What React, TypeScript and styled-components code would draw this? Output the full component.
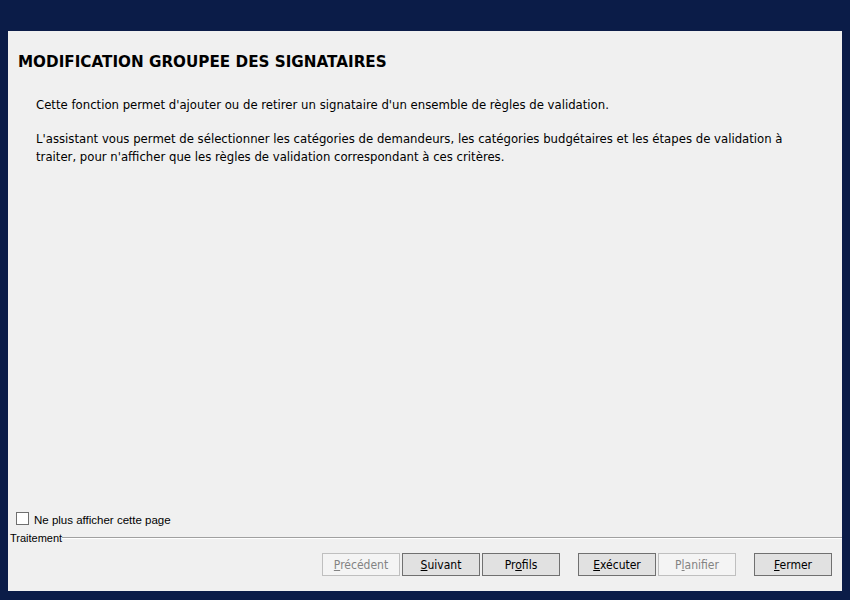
import styled, { createGlobalStyle } from "styled-components"

const GlobalStyle = createGlobalStyle`
  html, body {
    margin: 0;
    padding: 0;
    background: #0b1c48;
  }
  body {
    font-family: "DejaVu Sans", Tahoma, sans-serif;
  }
`

type ButtonDef = { label: string; key: string; disabled?: boolean }

const groups: ButtonDef[][] = [
  [
    { label: "Précédent", key: "P", disabled: true },
    { label: "Suivant", key: "S" },
    { label: "Profils", key: "o" },
  ],
  [
    { label: "Exécuter", key: "E" },
    { label: "Planifier", key: "l", disabled: true },
  ],
  [{ label: "Fermer", key: "F" }],
]

const renderLabel = (label: string, key: string) => {
  const i = label.indexOf(key)
  if (i < 0) return label
  return (
    <>
      {label.slice(0, i)}
      <u>{label[i]}</u>
      {label.slice(i + 1)}
    </>
  )
}

export default function App() {
  return (
    <Screen>
      <GlobalStyle />
      <Panel>
        <Content>
          <Title>MODIFICATION GROUPEE DES SIGNATAIRES</Title>
          <Body>
            <p>
              Cette fonction permet d'ajouter ou de retirer un signataire d'un ensemble de règles de
              validation.
            </p>
            <p>
              L'assistant vous permet de sélectionner les catégories de demandeurs, les catégories
              budgétaires et les étapes de validation à traiter, pour n'afficher que les règles de
              validation correspondant à ces critères.
            </p>
          </Body>
        </Content>
        <CheckRow>
          <CheckBox />
          <span>Ne plus afficher cette page</span>
        </CheckRow>
        <Fieldset>
          <Legend>Traitement</Legend>
          <Rule />
        </Fieldset>
        <ButtonBar>
          {groups.map((g, gi) => (
            <Group key={gi}>
              {g.map((b) => (
                <Button key={b.label} disabled={b.disabled}>
                  {renderLabel(b.label, b.key)}
                </Button>
              ))}
            </Group>
          ))}
        </ButtonBar>
      </Panel>
    </Screen>
  )
}

const Screen = styled.div`
  width: 850px;
  height: 600px;
  box-sizing: border-box;
  padding: 31px 8px 9px 8px;
  display: flex;
`

const Panel = styled.div`
  flex: 1;
  background: #f0f0f0;
  display: flex;
  flex-direction: column;
`

const Content = styled.div`
  flex: 1;
  padding: 22px 10px 0 10px;
`

const Title = styled.h1`
  margin: 0;
  font-family: Tahoma, "DejaVu Sans", sans-serif;
  font-size: 15.2px;
  font-weight: bold;
  color: #000;
`

const Body = styled.div`
  padding: 25px 0 0 18px;
  font-family: "DejaVu Sans Condensed", "DejaVu Sans", sans-serif;
  font-size: 13px;
  line-height: 18px;
  color: #000;
  p {
    margin: 0 0 16px 0;
    max-width: 752px;
  }
`

const CheckRow = styled.label`
  display: flex;
  align-items: center;
  gap: 5px;
  padding-left: 8px;
  font-family: "Liberation Sans", Arial, sans-serif;
  font-size: 11.5px;
  color: #000;
  height: 16px;
  margin-bottom: 3px;
`

const CheckBox = styled.span`
  width: 11px;
  height: 11px;
  border: 1px solid #6f6f6f;
  background: #fff;
  display: inline-block;
  margin-top: -3px;
`

const Fieldset = styled.div`
  display: flex;
  align-items: center;
  height: 14px;
  padding-left: 2px;
`

const Legend = styled.span`
  font-family: "Liberation Sans", Arial, sans-serif;
  font-size: 11px;
  color: #000;
`

const Rule = styled.div`
  flex: 1;
  height: 1px;
  background: #a0a0a0;
  border-bottom: 1px solid #fff;
`

const ButtonBar = styled.div`
  display: flex;
  justify-content: flex-end;
  gap: 18px;
  padding: 8px 10px 15px 0;
`

const Group = styled.div`
  display: flex;
  gap: 2px;
`

const Button = styled.button`
  width: 78px;
  height: 23px;
  box-sizing: border-box;
  border: 1px solid ${(p) => (p.disabled ? "#bfbfbf" : "#707070")};
  background: ${(p) => (p.disabled ? "#f4f4f4" : "#e1e1e1")};
  color: ${(p) => (p.disabled ? "#838383" : "#000")};
  font-family: "DejaVu Sans Condensed", "DejaVu Sans", sans-serif;
  font-size: 12px;
  padding: 0;
  cursor: default;
`
